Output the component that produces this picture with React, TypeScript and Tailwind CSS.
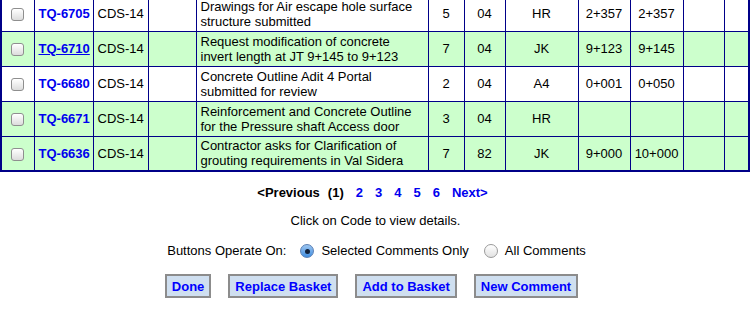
import React from "react";

type Row = {
  code: string;
  desc: [string, string];
  n: string;
  c: string;
  loc: string;
  from: string;
  to: string;
  green: boolean;
  underline?: boolean;
};

const rows: Row[] = [
  { code: "TQ-6705", desc: ["Drawings for Air escape hole surface", "structure submitted"], n: "5", c: "04", loc: "HR", from: "2+357", to: "2+357", green: false },
  { code: "TQ-6710", desc: ["Request modification of concrete", "invert length at JT 9+145 to 9+123"], n: "7", c: "04", loc: "JK", from: "9+123", to: "9+145", green: true, underline: true },
  { code: "TQ-6680", desc: ["Concrete Outline Adit 4 Portal", "submitted for review"], n: "2", c: "04", loc: "A4", from: "0+001", to: "0+050", green: false },
  { code: "TQ-6671", desc: ["Reinforcement and Concrete Outline", "for the Pressure shaft Access door"], n: "3", c: "04", loc: "HR", from: "", to: "", green: true },
  { code: "TQ-6636", desc: ["Contractor asks for Clarification of", "grouting requirements in Val Sidera"], n: "7", c: "82", loc: "JK", from: "9+000", to: "10+000", green: true },
];

const widths = [33, 59, 55, 48, 232, 36, 41, 73, 52, 53, 41, 25];

function Checkbox() {
  return (
    <span className="inline-block w-[13px] h-[13px] rounded-[3px] border border-[#8e8e8e] bg-gradient-to-b from-white to-[#dcdcdc] shadow-[inset_0_1px_1px_rgba(255,255,255,0.9)] align-middle" />
  );
}

function Radio({ on }: { on: boolean }) {
  if (on) {
    return (
      <span className="inline-flex items-center justify-center w-[14px] h-[14px] rounded-full border border-[#5a7fb5] bg-gradient-to-b from-[#9cc6f0] to-[#3f8ee0]">
        <span className="w-[5px] h-[5px] rounded-full bg-[#10203a]" />
      </span>
    );
  }
  return (
    <span className="inline-block w-[14px] h-[14px] rounded-full border border-[#9a9a9a] bg-gradient-to-b from-white to-[#e2e2e2]" />
  );
}

function Btn({ label }: { label: string }) {
  return (
    <span className="inline-flex items-center h-[24px] px-[5px] border-2 border-[#8c8c8c] bg-[#cfdff0] text-[#0000ff] font-bold text-[13px] leading-none whitespace-nowrap">
      {label}
    </span>
  );
}

export default function App() {
  const cell = "border border-[#000088] px-[4px] text-[13px] leading-[15px] text-black whitespace-nowrap overflow-hidden";
  return (
    <div className="w-[753px] h-[312px] overflow-hidden bg-white" style={{ fontFamily: '"Liberation Sans", Arial, Helvetica, sans-serif' }}>
      <div className="mt-[-5px]">
        <table className="border-collapse border-2 border-[#000088] table-fixed w-[749px]">
          <colgroup>
            {widths.map((w, i) => (
              <col key={i} style={{ width: w }} />
            ))}
          </colgroup>
          <tbody>
            {rows.map((r, i) => (
              <tr key={i} className={r.green ? "bg-[#ccffcc] h-[35px]" : "bg-white h-[35px]"}>
                <td className={cell + " text-center"}>
                  <Checkbox />
                </td>
                <td className={cell}>
                  <span className={"font-bold text-[#0000ee] " + (r.underline ? "underline" : "")}>{r.code}</span>
                </td>
                <td className={cell}>CDS-14</td>
                <td className={cell}></td>
                <td className={cell}>
                  <div>{r.desc[0]}</div>
                  <div>{r.desc[1]}</div>
                </td>
                <td className={cell + " text-center"}>{r.n}</td>
                <td className={cell + " text-center"}>{r.c}</td>
                <td className={cell + " text-center"}>{r.loc}</td>
                <td className={cell + " text-center"}>{r.from}</td>
                <td className={cell + " text-center"}>{r.to}</td>
                <td className={cell}></td>
                <td className={cell}></td>
              </tr>
            ))}
          </tbody>
        </table>
      </div>

      <div className="mt-[13px] flex justify-center items-center gap-[12px] text-[13px] leading-[16px] font-bold pr-[8px]">
        <span className="text-black">&lt;Previous</span>
        <span className="text-black -ml-[4px]">(1)</span>
        <span className="text-[#0000ee]">2</span>
        <span className="text-[#0000ee]">3</span>
        <span className="text-[#0000ee]">4</span>
        <span className="text-[#0000ee]">5</span>
        <span className="text-[#0000ee]">6</span>
        <span className="text-[#0000ee]">Next&gt;</span>
      </div>

      <div className="mt-[12px] text-center text-[13px] leading-[16px] text-black pr-[2px]">Click on Code to view details.</div>

      <div className="mt-[14px] flex justify-center items-center text-[13px] leading-[16px] text-black">
        <span>Buttons Operate On:</span>
        <span className="ml-[14px] mr-[7px] flex items-center"><Radio on /></span>
        <span>Selected Comments Only</span>
        <span className="ml-[15px] mr-[7px] flex items-center"><Radio on={false} /></span>
        <span>All Comments</span>
      </div>

      <div className="mt-[15px] flex justify-center items-center gap-[17px] pr-[10px]">
        <Btn label="Done" />
        <Btn label="Replace Basket" />
        <Btn label="Add to Basket" />
        <Btn label="New Comment" />
      </div>
    </div>
  );
}
